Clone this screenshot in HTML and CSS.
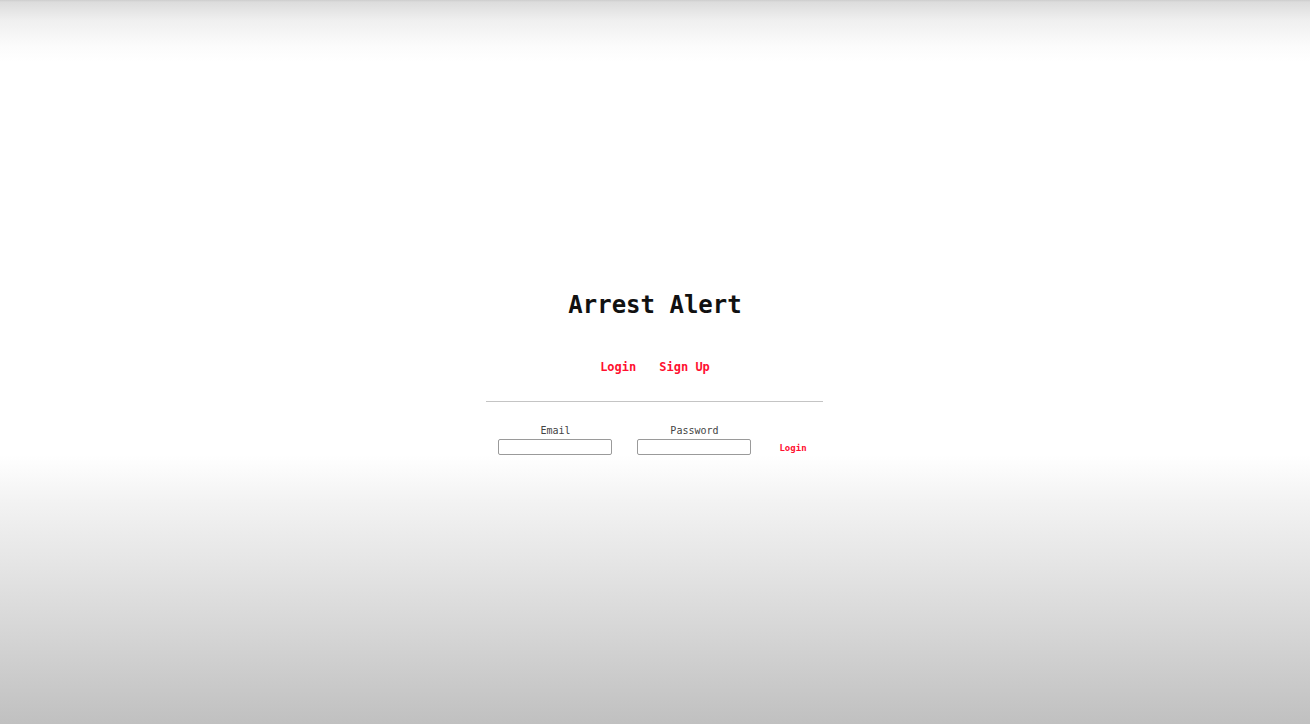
FILE: index.html
```html
<!DOCTYPE html>
<html lang="en">
<head>
<meta charset="utf-8">
<title>Arrest Alert</title>
<link rel="stylesheet" href="styles.css">
</head>
<body>
<main class="page">
  <h1 class="title">Arrest Alert</h1>
  <nav class="tabs">
    <a class="tab" href="#">Login</a>
    <a class="tab" href="#">Sign Up</a>
  </nav>
  <hr class="rule">
  <form class="login-form">
    <label class="field">
      <span class="field-label">Email</span>
      <input class="field-input" type="text">
    </label>
    <label class="field">
      <span class="field-label">Password</span>
      <input class="field-input" type="password">
    </label>
    <button class="submit" type="button">Login</button>
  </form>
</main>
</body>
</html>
```

FILE: styles.css
```css
html, body {
  margin: 0;
  padding: 0;
}

body {
  min-height: 724px;
  font-family: "DejaVu Sans Mono", "Liberation Mono", monospace;
  background: linear-gradient(to bottom,
    #cdcdcd 0px,
    #dcdcdc 2px,
    #efefef 20px,
    #fbfbfb 45px,
    #ffffff 62px,
    #ffffff 455px,
    #f3f3f3 500px,
    #e6e6e6 560px,
    #d4d4d4 640px,
    #c0c0c0 724px);
}

.page {
  display: flex;
  flex-direction: column;
  align-items: center;
  padding-top: 289px;
}

.title {
  margin: 0;
  font-size: 24px;
  font-weight: bold;
  line-height: 32px;
  color: #111;
  letter-spacing: 0;
}

.tabs {
  display: flex;
  gap: 23px;
  margin-top: 38px;
  margin-left: 0;
}

.tab {
  color: #ff1030;
  text-decoration: none;
  font-size: 12px;
  font-weight: bold;
  line-height: 16px;
}

.rule {
  width: 337px;
  height: 0;
  margin: 26px 0 0 -1px;
  border: 0;
  border-top: 1px solid #c4c4c4;
}

.login-form {
  display: flex;
  align-items: flex-end;
  gap: 25px;
  margin-top: 22px;
  margin-left: -5px;
}

.field {
  display: flex;
  flex-direction: column;
  align-items: center;
  gap: 2px;
}

.field-label {
  font-size: 10px;
  line-height: 13px;
  color: #444;
}

.field-input {
  box-sizing: border-box;
  width: 114px;
  height: 16px;
  margin: 0;
  padding: 0 3px;
  border: 1px solid #9a9a9a;
  border-radius: 2px;
  background: #fff;
  font-size: 10px;
}

.submit {
  margin: 0 0 1px 3px;
  padding: 0;
  border: 0;
  background: none;
  color: #ff1030;
  font-family: inherit;
  font-size: 9px;
  font-weight: bold;
  line-height: 12px;
  cursor: pointer;
}
```
